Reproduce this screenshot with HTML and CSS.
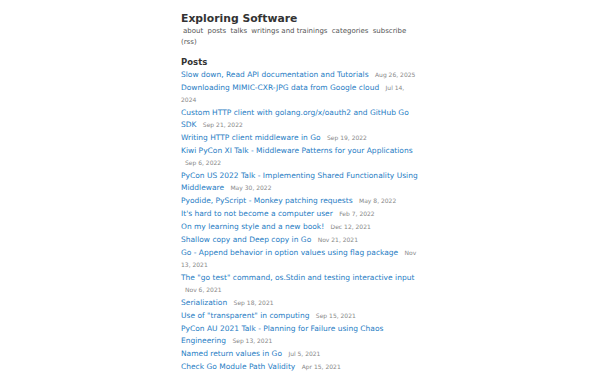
FILE: index.html
```html
<!DOCTYPE html>
<html lang="en">
<head>
  <meta charset="UTF-8" />
  <meta name="viewport" content="width=device-width, initial-scale=1.0"/>
  <title>Exploring Software</title>
  <link rel="stylesheet" href="styles.css">
</head>
<body>

  <div class="page">
    <header class="site-header">
      <h1 class="site-title">Exploring Software</h1>
      <nav class="site-nav">
        <a href="#">about</a>
        <a href="#">posts</a>
        <a href="#">talks</a>
        <a href="#">writings and trainings</a>
        <a href="#">categories</a>
        <a href="#">subscribe (rss)</a>
      </nav>
    </header>

    <section class="posts">
      <h2>Posts</h2>
      <ul class="post-list">
        <li><a href="#">Slow down, Read API documentation and Tutorials</a> <span class="date">Aug 26, 2025</span></li>
        <li><a href="#">Downloading MIMIC-CXR-JPG data from Google cloud</a> <span class="date">Jul 14, 2024</span></li>
        <li><a href="#">Custom HTTP client with golang.org/x/oauth2 and GitHub Go SDK</a> <span class="date">Sep 21, 2022</span></li>
        <li><a href="#">Writing HTTP client middleware in Go</a> <span class="date">Sep 19, 2022</span></li>
        <li><a href="#">Kiwi PyCon XI Talk - Middleware Patterns for your Applications</a> <span class="date">Sep 6, 2022</span></li>
        <li><a href="#">PyCon US 2022 Talk - Implementing Shared Functionality Using Middleware</a> <span class="date">May 30, 2022</span></li>
        <li><a href="#">Pyodide, PyScript - Monkey patching requests</a> <span class="date">May 8, 2022</span></li>
        <li><a href="#">It's hard to not become a computer user</a> <span class="date">Feb 7, 2022</span></li>
        <li><a href="#">On my learning style and a new book!</a> <span class="date">Dec 12, 2021</span></li>
        <li><a href="#">Shallow copy and Deep copy in Go</a> <span class="date">Nov 21, 2021</span></li>
        <li><a href="#">Go - Append behavior in option values using flag package</a> <span class="date">Nov 13, 2021</span></li>
        <li><a href="#">The "go test" command, os.Stdin and testing interactive input</a> <span class="date">Nov 6, 2021</span></li>
        <li><a href="#">Serialization</a> <span class="date">Sep 18, 2021</span></li>
        <li><a href="#">Use of "transparent" in computing</a> <span class="date">Sep 15, 2021</span></li>
        <li><a href="#">PyCon AU 2021 Talk - Planning for Failure using Chaos Engineering</a> <span class="date">Sep 13, 2021</span></li>
        <li><a href="#">Named return values in Go</a> <span class="date">Jul 5, 2021</span></li>
        <li><a href="#">Check Go Module Path Validity</a> <span class="date">Apr 15, 2021</span></li>
      </ul>
    </section>
  </div>

</body>
</html>
```

FILE: styles.css
```css
* {
  box-sizing: border-box;
}

body {
  margin: 0;
  padding: 0;
  background: #fff;
  font-family: 'DejaVu Sans', sans-serif;
  color: #444;
}

.page {
  width: 238px;
  margin: 0 auto;
  padding-top: 12px;
}

.site-title {
  margin: 0;
  font-size: 10.8px;
  font-weight: bold;
  color: #333;
}

.site-nav {
  margin-top: 1px;
  font-size: 7px;
  line-height: 11px;
}

.site-nav a {
  color: #555;
  text-decoration: none;
  margin-left: 2px;
}

.posts h2 {
  margin: 8px 0 1px;
  font-size: 8.5px;
  line-height: 12px;
  color: #333;
}

.post-list {
  list-style: none;
  margin: 0;
  padding: 0;
}

.post-list li {
  font-size: 7.5px;
  line-height: 12px;
  margin-bottom: 1px;
}

.post-list a {
  color: #1f7dc4;
  text-decoration: none;
}

.post-list .date {
  font-size: 6px;
  line-height: 1;
  color: #888;
  margin-left: 4px;
}
```
